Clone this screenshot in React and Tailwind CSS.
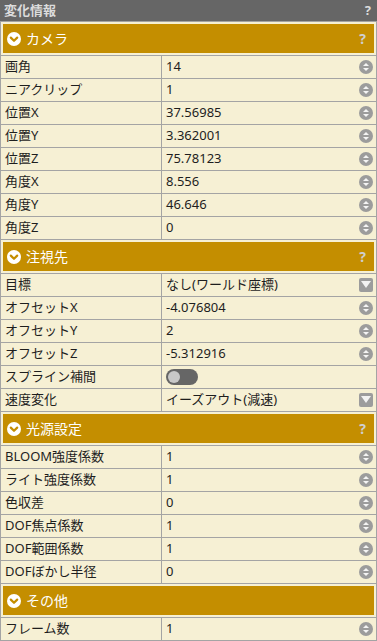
import React from "react";

const FONT = { fontFamily: '"Noto Sans", "Noto Sans CJK JP", sans-serif' };

function Spinner() {
  return (
    <svg width="14" height="14" viewBox="0 0 14 14" className="shrink-0">
      <circle cx="7" cy="7" r="7" fill="#9c9c9c" />
      <path d="M4 6 L7 3 L10 6 Z" fill="#f4f4f4" />
      <path d="M4 8 L7 11 L10 8 Z" fill="#f4f4f4" />
      <rect x="3" y="6.5" width="8" height="1" fill="#9c9c9c" />
    </svg>
  );
}

function SelectIcon() {
  return (
    <svg width="14" height="14" viewBox="0 0 14 14" className="shrink-0">
      <rect x="0" y="0" width="14" height="14" rx="2" fill="#9c9c9c" />
      <path d="M2 3 L12 3 L7 10 Z" fill="#f2f2f2" />
    </svg>
  );
}

function Chevron() {
  return (
    <svg width="14" height="14" viewBox="0 0 14 14" className="shrink-0">
      <circle cx="7" cy="7" r="7" fill="#ffffff" />
      <path d="M3.8 5.6 L7 8.8 L10.2 5.6" stroke="#c48e00" strokeWidth="2.2" fill="none" strokeLinecap="round" strokeLinejoin="round" />
    </svg>
  );
}

function Header({ title, help = true }) {
  return (
    <div className="border-t border-[#a4a4a4] bg-[#f6f0d4] p-[2px]">
      <div className="flex h-[29px] items-center bg-[#c48e00] pl-[4px] pr-[8px]">
        <Chevron />
        <span className="ml-[5px] text-[14px] text-white">{title}</span>
        <span className="flex-1" />
        {help && <span className="text-[14px] font-bold text-[#cfcfcf]">?</span>}
      </div>
    </div>
  );
}

function Row({ label, value, kind = "spin" }) {
  return (
    <div className="flex h-[23px] border-t border-[#a4a4a4] bg-[#f6f0d4] text-[13px] text-[#1e1e1e]">
      <div className="flex w-[161px] items-center border-r border-[#a4a4a4] pl-[4px]">{label}</div>
      <div className="flex flex-1 items-center pl-[4px] pr-[3px]">
        {kind === "toggle" ? (
          <div className="flex h-[16px] w-[32px] items-center rounded-full bg-[#666666] pl-[2px]">
            <div className="h-[12px] w-[12px] rounded-full bg-[#c8c8c8]" />
          </div>
        ) : (
          <span className="flex-1">{value}</span>
        )}
        {kind === "spin" && <Spinner />}
        {kind === "select" && <SelectIcon />}
      </div>
    </div>
  );
}

export default function App() {
  return (
    <div style={FONT} className="w-[377px] h-[641px] overflow-hidden bg-[#f6f0d4]">
      <div className="flex h-[21px] items-center bg-[#666666] pl-[4px] pr-[6px]">
        <span className="text-[13px] font-bold text-[#dcdcdc]">変化情報</span>
        <span className="flex-1" />
        <span className="text-[13px] font-bold text-[#dcdcdc]">?</span>
      </div>
      <div className="border-x border-b border-[#a4a4a4]">
        <Header title="カメラ" />
        <Row label="画角" value="14" />
        <Row label="ニアクリップ" value="1" />
        <Row label="位置X" value="37.56985" />
        <Row label="位置Y" value="3.362001" />
        <Row label="位置Z" value="75.78123" />
        <Row label="角度X" value="8.556" />
        <Row label="角度Y" value="46.646" />
        <Row label="角度Z" value="0" />
        <Header title="注視先" />
        <Row label="目標" value="なし(ワールド座標)" kind="select" />
        <Row label="オフセットX" value="-4.076804" />
        <Row label="オフセットY" value="2" />
        <Row label="オフセットZ" value="-5.312916" />
        <Row label="スプライン補間" kind="toggle" />
        <Row label="速度変化" value="イーズアウト(減速)" kind="select" />
        <Header title="光源設定" />
        <Row label="BLOOM強度係数" value="1" />
        <Row label="ライト強度係数" value="1" />
        <Row label="色収差" value="0" />
        <Row label="DOF焦点係数" value="1" />
        <Row label="DOF範囲係数" value="1" />
        <Row label="DOFぼかし半径" value="0" />
        <Header title="その他" help={false} />
        <Row label="フレーム数" value="1" />
      </div>
    </div>
  );
}
